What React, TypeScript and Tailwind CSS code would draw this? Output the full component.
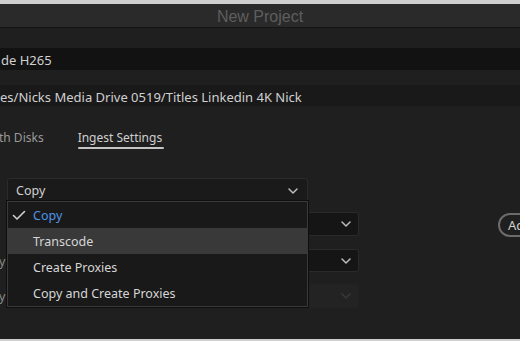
import React from "react";

const Chevron = ({ className = "" }: { className?: string }) => (
  <svg width="10" height="6" viewBox="0 0 10 6" className={className} fill="none">
    <path d="M1 1 L5 5 L9 1" stroke="currentColor" strokeWidth="1.5" strokeLinecap="round" strokeLinejoin="round" />
  </svg>
);

const BackSelect = ({ disabled = false, h }: { disabled?: boolean; h: string }) => (
  <div
    className={`ml-auto mr-[161px] flex ${h} w-[240px] items-center justify-end rounded-[3px] border pr-[7px] ${
      disabled ? "border-[#222222] bg-[#232323] text-[#3a3a3a]" : "border-[#2a2a2a] bg-[#151515] text-[#bdbdbd]"
    }`}
  >
    <Chevron />
  </div>
);

export default function App() {
  const font = { fontFamily: '"Noto Sans", "Open Sans", sans-serif' };
  return (
    <div className="relative flex h-[341px] w-[520px] flex-col overflow-hidden bg-[#1f1f1f]" style={font}>
      <div className="h-[4px] shrink-0 bg-[#cfcfcf]" />
      <div
        className="flex h-[24px] shrink-0 items-center justify-center border-b border-[#141414] bg-[#2a2a2a] pt-[3px] text-[16px] leading-none text-[#5e5e5e]"
        style={{ fontFamily: '"Liberation Sans", Arial, sans-serif' }}
      >
        New Project
      </div>
      <div className="flex flex-1 flex-col text-[12.5px] leading-[18px] text-[#d0d0d0]">
        <div className="mt-[20px] flex h-[22px] shrink-0 items-center bg-[#121212] pl-[1px] pt-[2px] text-[13px]">de H265</div>
        <div className="mt-[15px] flex h-[21px] shrink-0 items-center bg-[#191919] pt-[2px] text-[13px]">
          es/Nicks Media Drive 0519/Titles Linkedin 4K Nick
        </div>
        <div className="mt-[22px] flex h-[21px] shrink-0 items-start text-[12px] text-[#9a9a9a]">
          <div className="ml-[-1px] pt-[1px]">th Disks</div>
          <div className="ml-[34px] flex flex-col items-start text-[#cfcfcf]">
            <span className="h-[19px] pt-[1px]">Ingest Settings</span>
            <span className="h-[2px] w-[86px] rounded bg-[#c4c4c4]" />
          </div>
        </div>
        <div className="mt-[29px] ml-[7px] flex h-[22px] w-[301px] shrink-0 items-center justify-between rounded-t-[3px] border border-b-0 border-[#2b2b2b] bg-[#1a1a1a] pl-[8px] pr-[9px] pt-[2px] text-[#cfcfcf]">
          <span>Copy</span>
          <Chevron className="text-[#bdbdbd]" />
        </div>
        <div className="mt-[12px] flex h-[24px] shrink-0 items-center">
          <BackSelect h="h-[24px]" />
        </div>
        <div className="mt-[13px] flex h-[23px] shrink-0 items-center text-[#8a8a8a]">
          <span className="ml-[-1px] pt-[2px]">y</span>
          <BackSelect h="h-[23px]" />
        </div>
        <div className="mt-[12px] flex h-[24px] shrink-0 items-center text-[#8a8a8a]">
          <span className="ml-[-1px] pt-[2px]">y</span>
          <BackSelect disabled h="h-[24px]" />
        </div>
        <div className="flex-1" />
      </div>
      <div className="h-[2px] shrink-0 bg-[#cfcfcf]" />

      <div className="absolute left-[498px] top-[213px] flex h-[24px] w-[60px] items-center rounded-full border-2 border-[#6b6b6b] pl-[8px] pt-[2px] text-[13px] text-[#cfcfcf]">
        Add
      </div>

      <div className="absolute left-[7px] top-[201px] flex w-[301px] flex-col border border-[#3a3a3a] bg-[#191919] text-[12.5px] text-[#d6d6d6] shadow-[0_0_0_1px_#0e0e0e]">
        <div className="flex h-[26px] items-center pt-[2px]">
          <svg width="14" height="11" viewBox="0 0 14 11" className="ml-[4px] mt-[-2px] text-[#cfcfcf]" fill="none">
            <path d="M1.5 5.5 L5 9 L12.5 1.5" stroke="currentColor" strokeWidth="1.6" strokeLinecap="round" strokeLinejoin="round" />
          </svg>
          <span className="ml-[7px] text-[#4d95e8]">Copy</span>
        </div>
        <div className="flex h-[26px] items-center bg-[#393939] pl-[25px] pt-[2px]">Transcode</div>
        <div className="flex h-[26px] items-center pl-[25px] pt-[2px]">Create Proxies</div>
        <div className="flex h-[26px] items-center pl-[25px] pt-[2px]">Copy and Create Proxies</div>
      </div>
    </div>
  );
}
